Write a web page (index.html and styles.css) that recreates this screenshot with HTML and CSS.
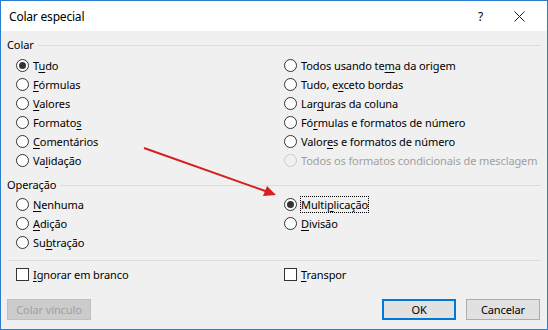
FILE: index.html
```html
<!DOCTYPE html>
<html>
<head>
<meta charset="utf-8">
<link rel="stylesheet" href="styles.css">
</head>
<body>
<div class="window">
  <div class="titlebar">
    <span class="title">Colar especial</span>
    <span class="help">?</span>
    <span class="close"><svg width="11" height="11" viewBox="0 0 11 11"><path d="M0.5 0.5 L10.5 10.5 M10.5 0.5 L0.5 10.5" stroke="#222" stroke-width="1" fill="none"/></svg></span>
  </div>
  <div class="content">
    <div class="legend legend-first"><span>Colar</span><div class="rule"></div></div>
    <div class="grid">
      <div class="col">
        <div class="row"><span class="radio checked"></span><span>T<u>u</u>do</span></div>
        <div class="row"><span class="radio"></span><span><u>F</u>órmulas</span></div>
        <div class="row"><span class="radio"></span><span><u>V</u>alores</span></div>
        <div class="row"><span class="radio"></span><span>Formato<u>s</u></span></div>
        <div class="row"><span class="radio"></span><span><u>C</u>omentários</span></div>
        <div class="row"><span class="radio"></span><span>Va<u>l</u>idação</span></div>
      </div>
      <div class="col">
        <div class="row"><span class="radio"></span><span>Todos usando te<u>m</u>a da origem</span></div>
        <div class="row"><span class="radio"></span><span>Tudo, e<u>x</u>ceto bordas</span></div>
        <div class="row"><span class="radio"></span><span>Lar<u>g</u>uras da coluna</span></div>
        <div class="row"><span class="radio"></span><span>Fó<u>r</u>mulas e formatos de número</span></div>
        <div class="row"><span class="radio"></span><span>Valor<u>e</u>s e formatos de número</span></div>
        <div class="row disabled"><span class="radio"></span><span>Todos os formatos condicionais de mesclagem</span></div>
      </div>
    </div>
    <div class="legend legend-second"><span>Operação</span><div class="rule"></div></div>
    <div class="grid">
      <div class="col">
        <div class="row"><span class="radio"></span><span><u>N</u>enhuma</span></div>
        <div class="row"><span class="radio"></span><span><u>A</u>dição</span></div>
        <div class="row"><span class="radio"></span><span>Su<u>b</u>tração</span></div>
      </div>
      <div class="col">
        <div class="row"><span class="radio checked"></span><span class="focus">Multi<u>p</u>licação</span></div>
        <div class="row"><span class="radio"></span><span><u>D</u>ivisão</span></div>
      </div>
    </div>
    <div class="separator"></div>
    <div class="grid checks">
      <div class="row"><span class="checkbox"></span><span><u>I</u>gnorar em branco</span></div>
      <div class="row"><span class="checkbox"></span><span><u>T</u>ranspor</span></div>
    </div>
    <div class="buttons">
      <button class="btn disabled-btn">Colar vínculo</button>
      <div class="spacer"></div>
      <button class="btn default-btn">OK</button>
      <button class="btn">Cancelar</button>
    </div>
  </div>
  <svg class="arrow" width="548" height="330" viewBox="0 0 548 330">
    <line x1="144" y1="148" x2="268" y2="192" stroke="#d42020" stroke-width="2"/>
    <polygon points="276,195 263,196 267,186" fill="#d42020"/>
  </svg>
</div>
</body>
</html>
```

FILE: styles.css
```css
* { box-sizing: border-box; }
html, body { margin: 0; padding: 0; }
body {
  font-family: "Noto Sans", "Open Sans", sans-serif;
  font-size: 11px;
  letter-spacing: -0.1px;
  color: #000;
  background: #f0f0f0;
}
.window {
  position: relative;
  width: 548px;
  height: 330px;
  border: 1px solid #2b7bcf;
  background: #f0f0f0;
  display: flex;
  flex-direction: column;
}
.titlebar {
  height: 30px;
  background: #fff;
  display: flex;
  align-items: center;
  padding-left: 8px;
  flex-shrink: 0;
}
.title { flex: 1; font-size: 12px; letter-spacing: -0.2px; }
.help { width: 20px; margin-right: 16px; font-size: 12px; }
.close { width: 11px; margin-right: 22px; display: flex; }
.content {
  flex: 1;
  padding: 0 6px 0 6px;
  display: flex;
  flex-direction: column;
}
.legend {
  display: flex;
  align-items: center;
  height: 16px;
  line-height: 16px;
}
.legend span { margin-right: 4px; }
.legend .rule { flex: 1; height: 1px; background: #dcdcdc; margin-right: 0; }
.legend-first { margin-top: 6px; margin-bottom: 3px; }
.legend-second { margin-top: 7px; margin-bottom: 2px; }
.grid {
  display: grid;
  grid-template-columns: 268px 1fr;
}
.col { display: flex; flex-direction: column; }
.row {
  display: flex;
  align-items: center;
  height: 19px;
  padding-left: 9px;
  white-space: nowrap;
}
.radio {
  width: 13px;
  height: 13px;
  border: 1px solid #333;
  border-radius: 50%;
  background: #fff;
  margin-right: 4px;
  display: flex;
  align-items: center;
  justify-content: center;
  flex-shrink: 0;
}
.radio.checked::after {
  content: "";
  width: 7px;
  height: 7px;
  border-radius: 50%;
  background: #333;
}
.disabled { color: #a0a0a0; }
.disabled .radio { border-color: #cacaca; background: #f0f0f0; }
.focus { outline: 1px dotted #000; outline-offset: 0; }
u { text-decoration-thickness: 1px; text-underline-offset: 2px; }
.separator {
  height: 1px;
  background: #dcdcdc;
  margin: 8px 0 4px 1px;
}
.checks .row { height: 19px; }
.checkbox {
  width: 13px;
  height: 13px;
  border: 1px solid #333;
  background: #fff;
  margin-right: 4px;
  flex-shrink: 0;
}
.buttons {
  display: flex;
  margin-top: 15px;
  padding-left: 0;
  padding-right: 1px;
}
.spacer { flex: 1; }
.btn {
  font-family: inherit;
  font-size: 11px;
  letter-spacing: -0.1px;
  height: 21px;
  width: 74px;
  padding: 0;
  background: #e1e1e1;
  border: 1px solid #adadad;
  color: #000;
  margin-left: 10px;
}
.disabled-btn {
  width: 84px;
  margin-left: 0;
  background: #cccccc;
  border-color: #bfbfbf;
  color: #a0a0a0;
}
.default-btn { border: 2px solid #0078d7; }
.arrow {
  position: absolute;
  left: -1px;
  top: -1px;
  pointer-events: none;
}
```
